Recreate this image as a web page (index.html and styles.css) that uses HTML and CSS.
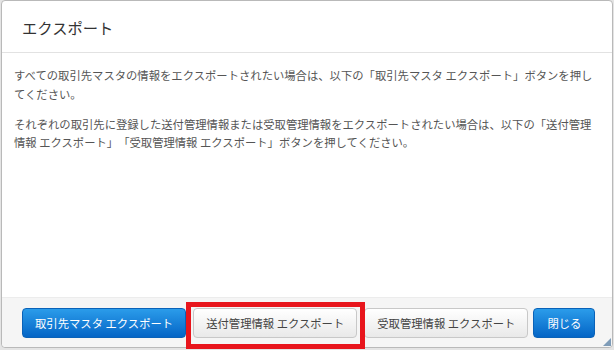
FILE: index.html
```html
<!DOCTYPE html>
<html lang="ja">
<head>
  <meta charset="UTF-8">
  <title>エクスポート</title>
  <link rel="stylesheet" href="styles.css">
</head>
<body>
  <div class="dialog">
    <div class="dialog-header">
      <h1>エクスポート</h1>
    </div>
    <div class="dialog-body">
      <p>すべての取引先マスタの情報をエクスポートされたい場合は、以下の「取引先マスタ エクスポート」ボタンを押してください。</p>
      <p>それぞれの取引先に登録した送付管理情報または受取管理情報をエクスポートされたい場合は、以下の「送付管理情報 エクスポート」「受取管理情報 エクスポート」ボタンを押してください。</p>
    </div>
    <div class="dialog-footer">
      <button class="btn btn-primary">取引先マスタ エクスポート</button>
      <button class="btn">送付管理情報 エクスポート</button>
      <button class="btn">受取管理情報 エクスポート</button>
      <button class="btn btn-primary btn-close">閉じる</button>
    </div>
    <svg class="grip" width="8" height="8" viewBox="0 0 8 8">
      <polygon points="8,0 8,8 0,8" fill="#7f9cb8"/>
    </svg>
  </div>
  <div class="highlight"></div>
</body>
</html>
```

FILE: styles.css
```css
body {
  margin: 0;
  background: #e4e4e4;
  font-family: "Noto Sans CJK JP", "Noto Sans", sans-serif;
  font-size: 11.33px;
  color: #555;
  text-spacing-trim: space-all;
}

.dialog {
  position: relative;
  box-sizing: border-box;
  margin-left: 1px;
  width: 612px;
  height: 348px;
  background: #fff;
  border: 1px solid #b9b9b9;
  border-radius: 4px;
  display: flex;
  flex-direction: column;
}

.dialog-header {
  box-sizing: border-box;
  height: 52px;
  padding-left: 20px;
  border-bottom: 1px solid #e2e2e2;
  display: flex;
  align-items: center;
}

.dialog-header h1 {
  margin: 0;
  font-size: 15.3px;
  font-weight: normal;
  color: #333;
}

.dialog-body {
  flex: 1;
  padding: 13px 12px 0 12px;
}

.dialog-body p {
  margin: 0 0 11.5px 0;
  line-height: 18.5px;
}

.dialog-footer {
  box-sizing: border-box;
  height: 50px;
  background: #f5f5f5;
  border-top: 1px solid #ececec;
  border-radius: 0 0 4px 4px;
  padding: 10px 0 0 20px;
  display: flex;
  gap: 7px;
}

.btn {
  box-sizing: border-box;
  height: 30px;
  padding: 0 12px;
  font-family: inherit;
  font-size: 11.33px;
  color: #444;
  background: linear-gradient(#ffffff, #e9e9e9);
  border: 1px solid #c8c8c8;
  border-radius: 4px;
  text-spacing-trim: space-all;
}

.btn-primary {
  color: #fff;
  background: linear-gradient(#2b9cea, #0465c6);
  border-color: #0a62b8;
}

.btn-close {
  margin-left: -2px;
  padding: 0 13px;
}

.grip {
  position: absolute;
  right: 1px;
  bottom: 1px;
}

.highlight {
  position: absolute;
  left: 186px;
  top: 302px;
  width: 179px;
  height: 47px;
  box-sizing: border-box;
  border: 5px solid #e8151c;
}
```
